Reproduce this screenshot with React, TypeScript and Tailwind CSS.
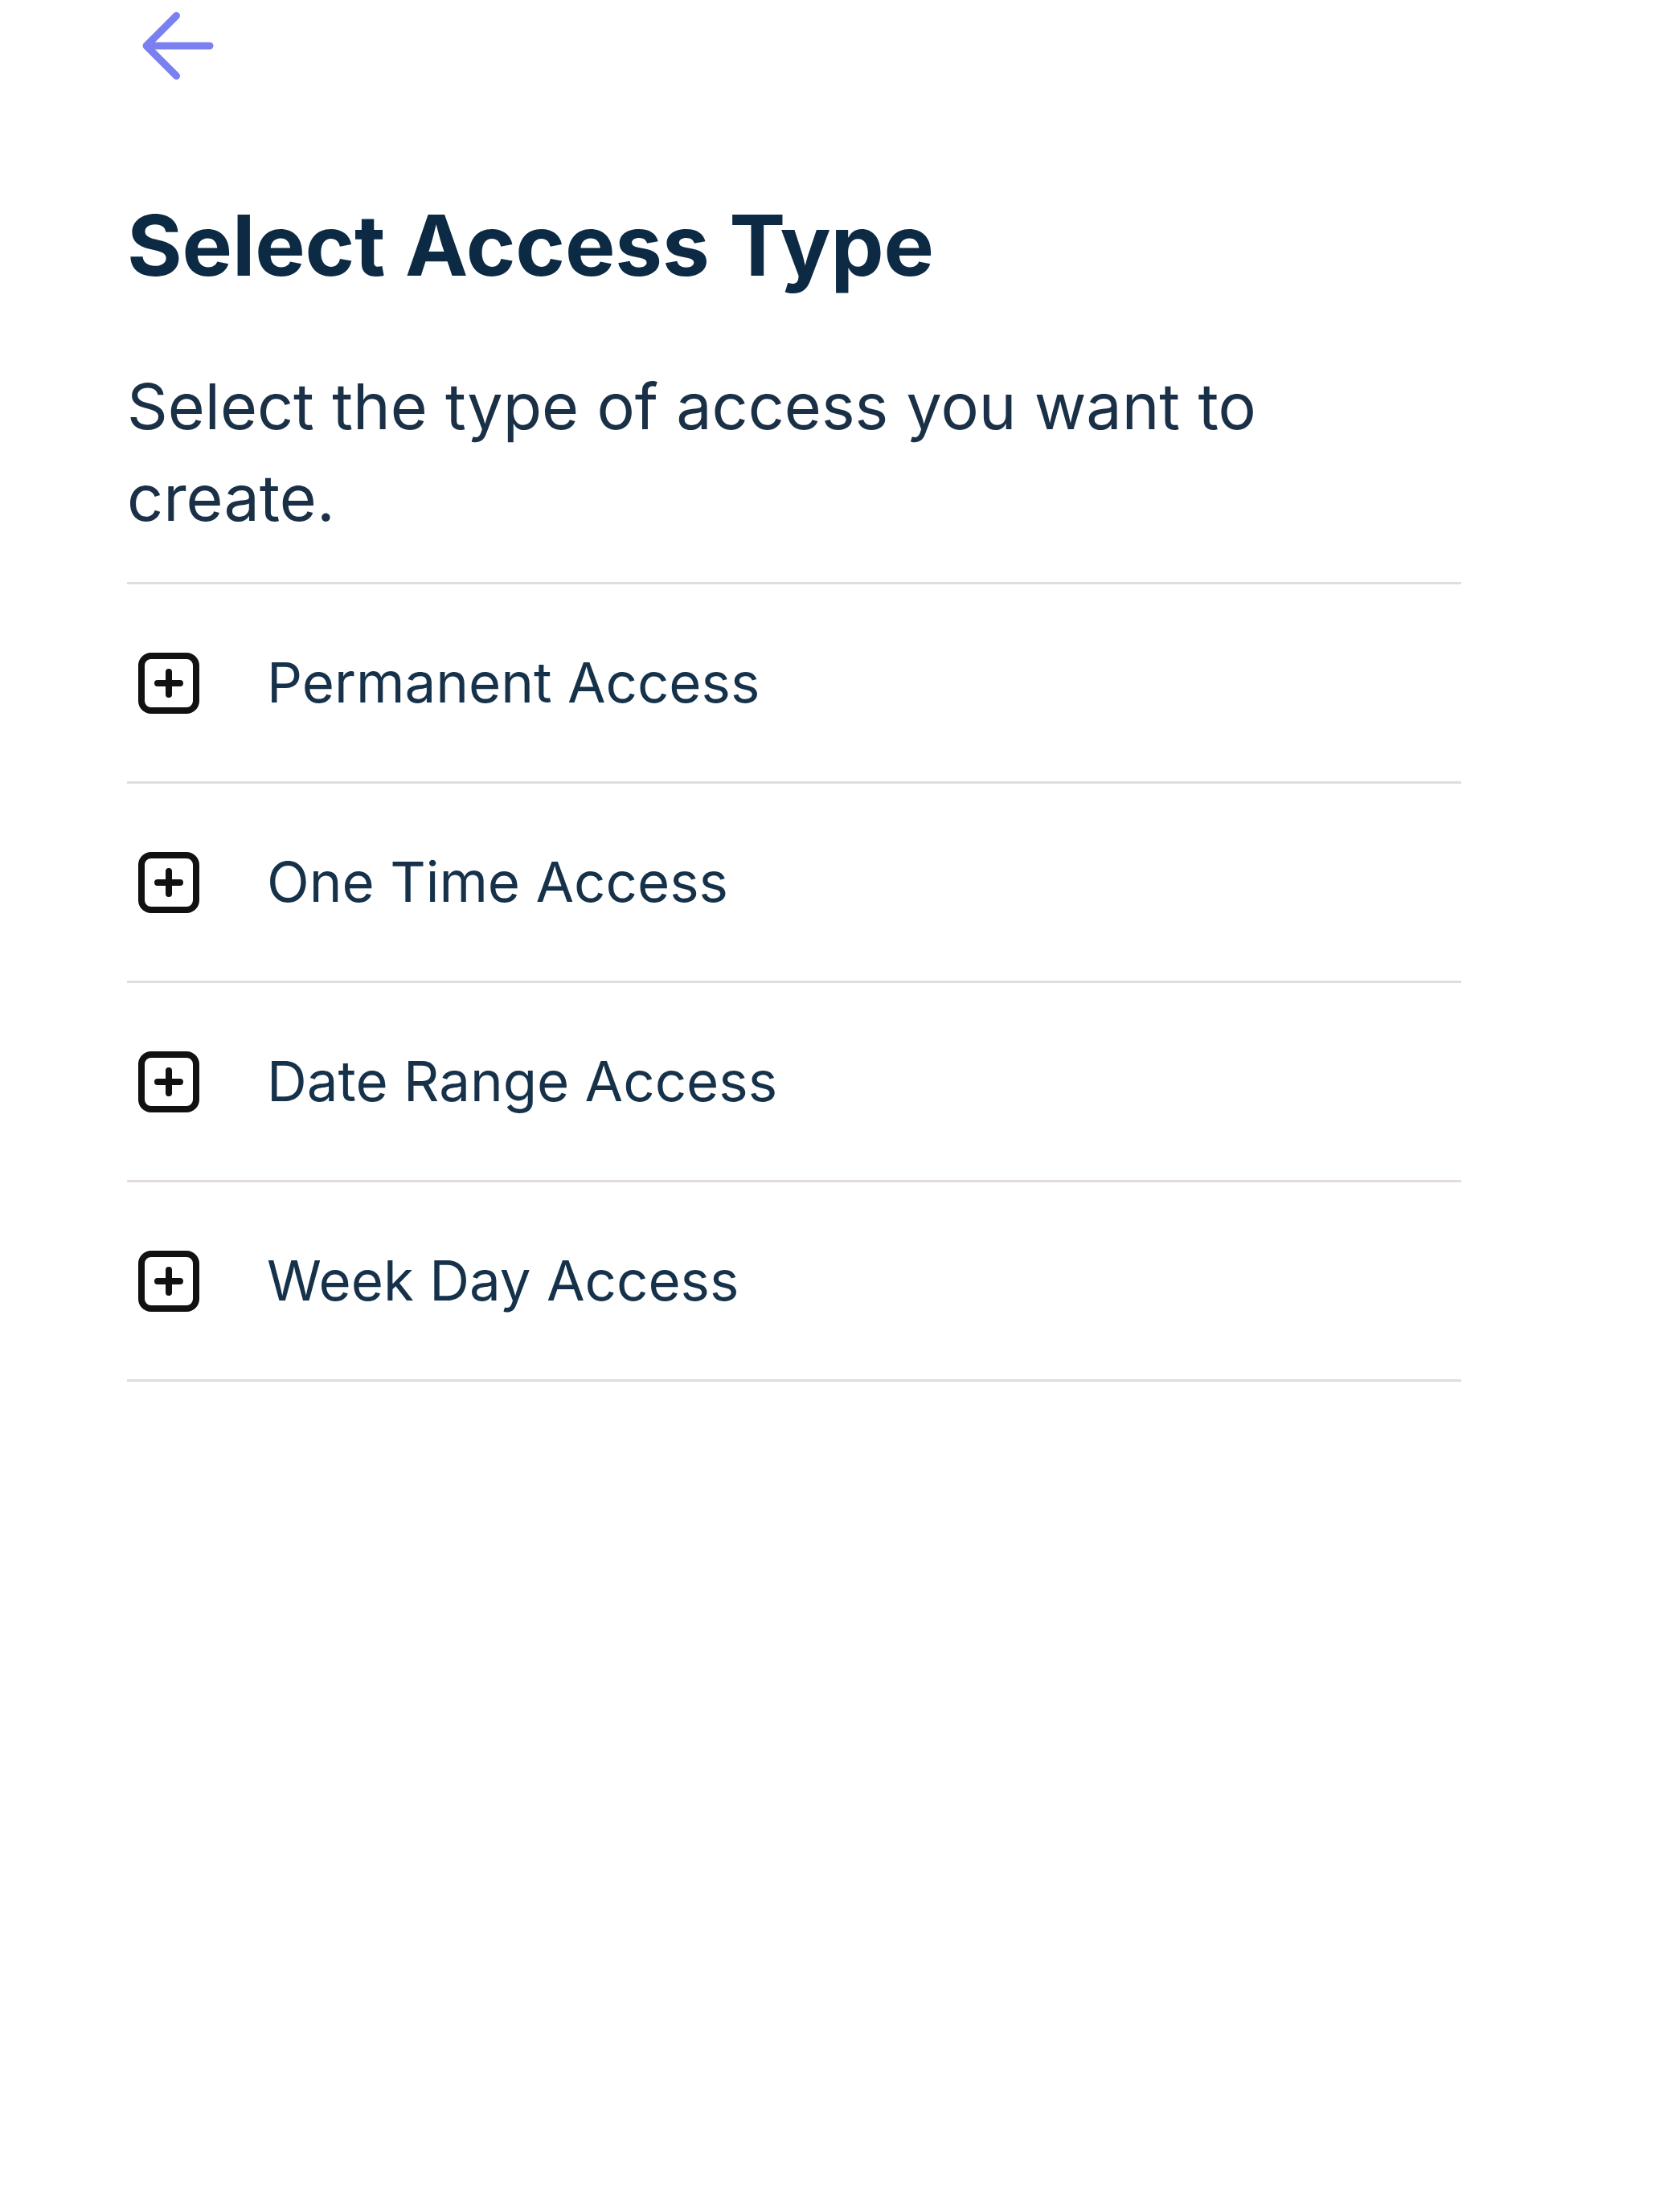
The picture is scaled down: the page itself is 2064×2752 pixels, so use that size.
import { useState } from 'react';

type AccessType = {
    id: string;
    label: string;
};

const ACCESS_TYPES: AccessType[] = [
    { id: 'permanent', label: 'Permanent Access' },
    { id: 'one-time', label: 'One Time Access' },
    { id: 'date-range', label: 'Date Range Access' },
    { id: 'week-day', label: 'Week Day Access' },
];

/** 뒤로가기 화살표 */
function BackArrow() {
    return (
        <svg width="96" height="96" viewBox="0 0 96 96" fill="none" className="block">
            <path
                d="M45.5 10.5 8 48l37.5 37.5M8 48h79"
                stroke="#7b80f1"
                strokeWidth="9"
                strokeLinecap="round"
                strokeLinejoin="round"
            />
        </svg>
    );
}

/** 사각형 + 아이콘 */
function SquarePlus() {
    return (
        <svg width="80" height="80" viewBox="0 0 80 80" fill="none" className="block shrink-0">
            <rect x="6" y="6" width="68" height="68" rx="12" stroke="#111" strokeWidth="8" />
            <path d="M40 26v28M26 40h28" stroke="#111" strokeWidth="8" strokeLinecap="round" />
        </svg>
    );
}

export default function App() {
    const [selected, setSelected] = useState<string | null>(null);

    return (
        <div className="min-h-screen bg-white pl-[158px] pr-[246px] font-['Inter','Liberation_Sans',sans-serif]">
            <button type="button" aria-label="Back" className="ml-[16px] mt-[9px] block">
                <BackArrow />
            </button>

            <h1 className="mt-[147px] text-[105px] font-bold leading-none tracking-[-0.2px] text-[#0c2a44]">
                Select Access Type
            </h1>

            <p className="mt-[91px] w-[1500px] text-[79px] leading-[114px] text-[#1a3047]">
                Select the type of access you want to create.
            </p>

            <ul className="mt-[48px] border-b-[3px] border-[#e2dcdb]">
                {ACCESS_TYPES.map((item) => (
                    <li key={item.id} className="border-t-[3px] border-[#e2dcdb]">
                        <button
                            type="button"
                            onClick={() => setSelected(item.id)}
                            aria-pressed={selected === item.id}
                            className="flex h-[245px] w-full items-center gap-[82px] pl-[12px] text-left"
                        >
                            <SquarePlus />
                            <span className="text-[69px] leading-none text-[#16324a]">{item.label}</span>
                        </button>
                    </li>
                ))}
            </ul>
        </div>
    );
}
